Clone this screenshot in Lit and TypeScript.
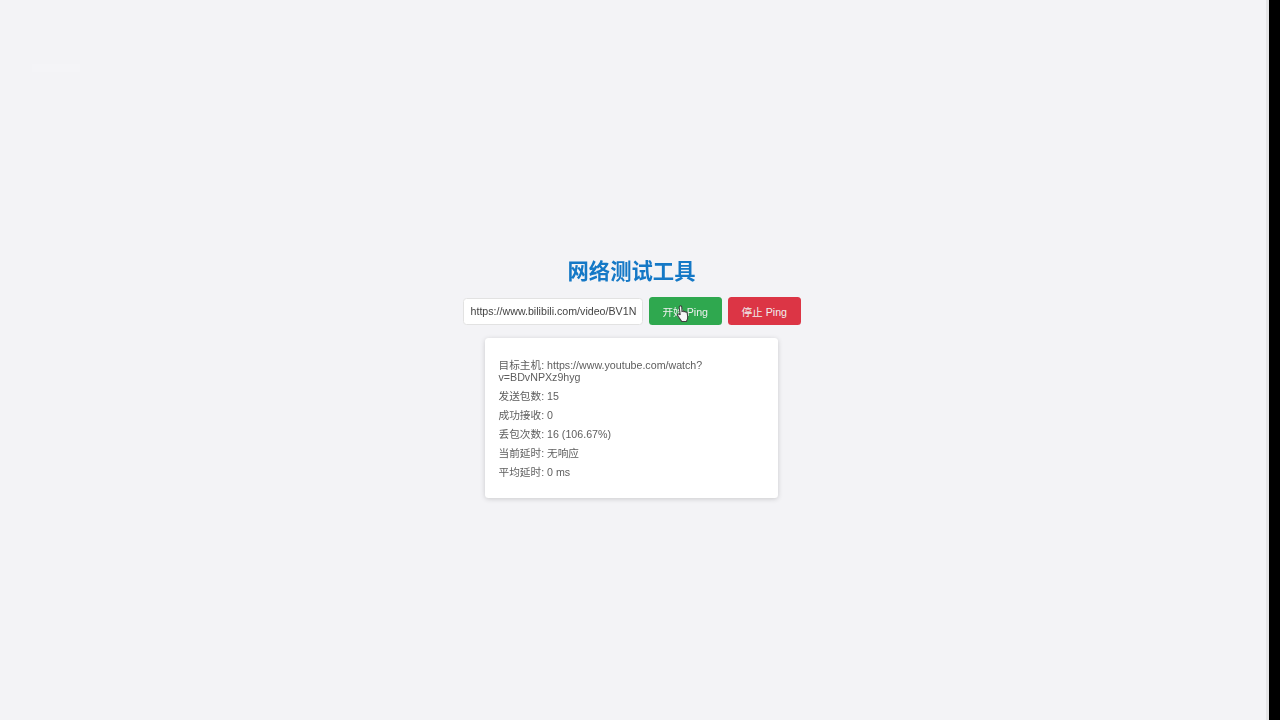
import { LitElement, html, css } from "lit";
import { customElement } from "lit/decorators.js";

@customElement("app-root")
export class AppRoot extends LitElement {
  static styles = css`
    :host { display: flex; height: 720px; width: 1280px; overflow: hidden; background: #000;
      font-family: "Liberation Sans", "Noto Sans CJK SC", Arial, sans-serif; }
    .page { position: relative; width: 1263px; padding-right: 3px; border-right: 3px solid #e4e4e6; background: #f3f3f6;
      display: flex; flex-direction: column; align-items: center; padding-top: 259px; box-sizing: content-box; }
    .ghost { position: absolute; left: 32px; top: 64px; width: 48px; height: 8px; background: #f4f4f7; }
    .content { display: flex; flex-direction: column; align-items: center; filter: blur(.4px); }
    h1 { margin: 0 0 11px; font-size: 21.33px; line-height: 27px; font-weight: 700; color: #1478c6;
      font-family: "Liberation Sans", "Noto Sans CJK SC", sans-serif; }
    .controls { display: flex; gap: 6.5px; align-items: center; height: 28px; margin-bottom: 13px; }
    .url { box-sizing: border-box; width: 180px; height: 27px; padding: 0 3px 0 7px; border: 1px solid #e2e2e2;
      border-radius: 3.5px; background: #fff; color: #444; font: 10.67px/27px "Liberation Sans", sans-serif; outline: none; }
    .btn { position: relative; box-sizing: border-box; width: 72.5px; height: 28px; border: 0; border-radius: 3.5px; padding: 0;
      color: #f0f0f0; font: 10.67px "Liberation Sans", "Noto Sans CJK SC", sans-serif; display: flex; align-items: center; justify-content: center; }
    .start { background: #2fa84f; }
    .stop { background: #dc3545; }
    .cursor { position: absolute; left: 27px; top: 8px; width: 13px; height: 18px; }
    .card { box-sizing: border-box; width: 293px; height: 160px; padding: 20.5px 13.5px 0; background: #fff;
      border-radius: 3.5px; box-shadow: 0 1px 5px rgba(0,0,0,.17); color: #5e5e5e; font-size: 10.67px; line-height: 12px; }
    .card p { margin: 0 0 7px; }
  `;

  render() {
    return html`<div class="page">
      <div class="ghost"></div>
      <div class="content">
      <h1>网络测试工具</h1>
      <div class="controls">
        <input class="url" .value=${"https://www.bilibili.com/video/BV1N"} />
        <button class="btn start">开始 Ping
          <svg class="cursor" viewBox="0 0 12 17"><path d="M3.4 1.1c.8-.6 1.8-.1 1.9.8l.2 4.3.7-.3c.6-.2 1.1-.1 1.3.4.6-.3 1.2-.2 1.5.4.6-.2 1.2 0 1.4.6l.5 3.8c.2 1.7-.3 3.1-1.2 4.4H5.2L1.7 10.4c-.6-.8-.5-1.6.2-1.9.6-.2 1.1 0 1.7.6l.2-.1-.9-6.7c-.1-.5.1-.9.5-1.2z" fill="#f7f7f7" stroke="#3f3f3f" stroke-width="1"/></svg>
        </button>
        <button class="btn stop">停止 Ping</button>
      </div>
      <div class="card">
        <p>目标主机: https://www.youtube.com/watch?v=BDvNPXz9hyg</p>
        <p>发送包数: 15</p>
        <p>成功接收: 0</p>
        <p>丢包次数: 16 (106.67%)</p>
        <p>当前延时: 无响应</p>
        <p>平均延时: 0 ms</p>
      </div>
      </div>
    </div>`;
  }
}
